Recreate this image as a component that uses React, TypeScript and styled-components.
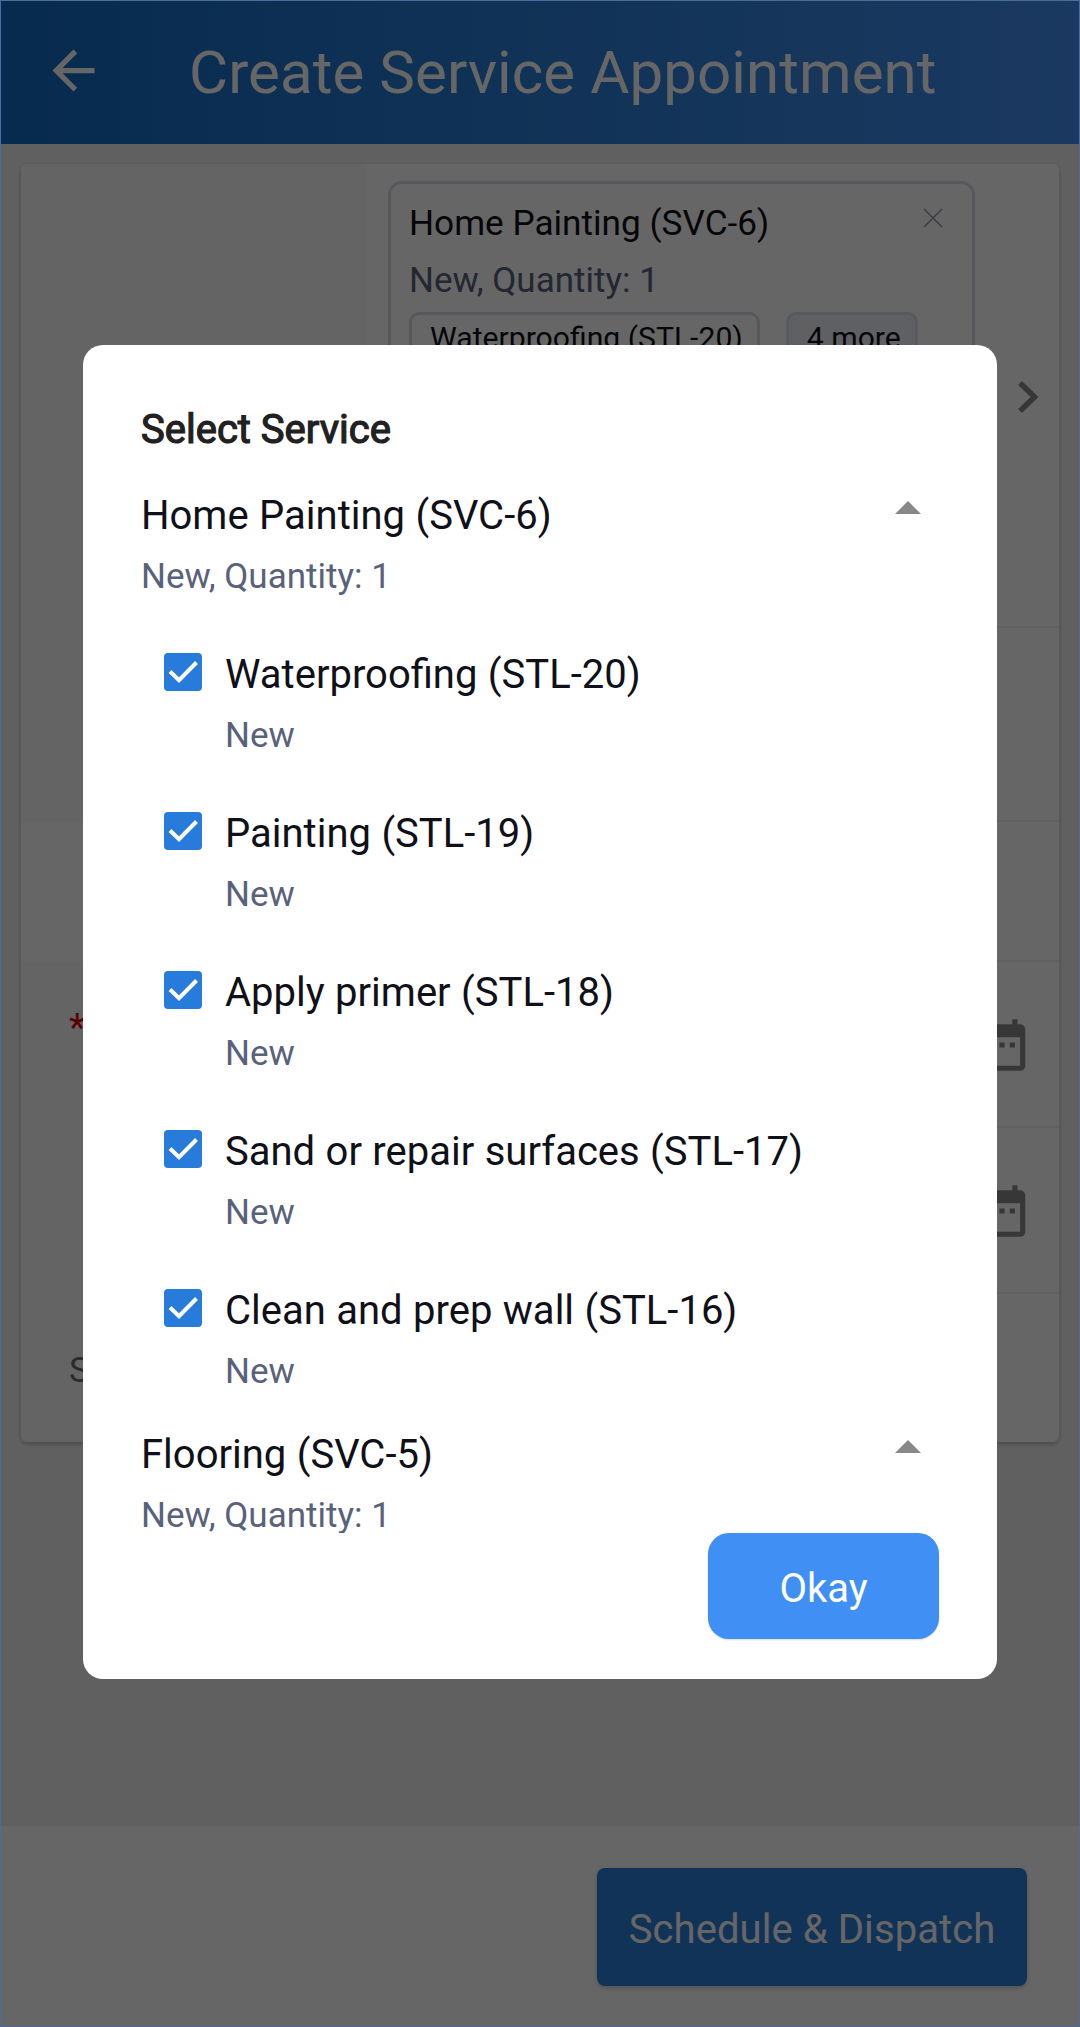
import React from 'react';
import styled, { createGlobalStyle } from 'styled-components';

const GlobalStyle = createGlobalStyle`
  * { box-sizing: border-box; }
  body { margin: 0; font-family: Roboto, "Liberation Sans", sans-serif; }
  button { font-family: inherit; border: 0; padding: 0; }
`;

const Screen = styled.div`
  position: relative;
  display: flex;
  flex-direction: column;
  width: 1080px;
  height: 2027px;
  background: #f1f1f1;
  overflow: hidden;
`;

const Header = styled.header`
  display: flex;
  align-items: center;
  height: 144px;
  flex: none;
  padding: 0 0 3px 42px;
  background: linear-gradient(90deg, #116bc4 0%, #2b7fd8 50%, #448ff2 100%);
  color: #fff;
`;

const BackIcon = styled.svg`
  width: 63px;
  height: 63px;
  flex: none;
  fill: #fff;
`;

const HeaderTitle = styled.h1`
  margin: 4px 0 0 84px;
  font-size: 60px;
  line-height: 68px;
  font-weight: 400;
  letter-spacing: 0.1px;
  white-space: nowrap;
`;

const FormCard = styled.section`
  display: flex;
  flex-direction: column;
  margin: 20px 21px 0;
  height: 1278px;
  flex: none;
  border-radius: 6px;
  background: #fff;
  box-shadow: 0 2px 4px rgba(0, 0, 0, 0.25);
  overflow: hidden;
`;

const FormLabel = styled.div<{ $plain?: boolean; $top?: number }>`
  width: 345px;
  flex: none;
  padding: ${(p) => p.$top ?? 0}px 0 0 48px;
  background: ${(p) => (p.$plain ? '#fff' : '#fbfbfb')};
  color: #6b6b6b;
  font-size: 35px;
  line-height: 40px;
  white-space: nowrap;
`;

const Required = styled.span`
  color: #e00000;
  font-size: 38px;
`;

const FormValue = styled.div`
  display: flex;
  flex: 1;
  justify-content: space-between;
  padding: 17px 0 0 22px;
  border-bottom: 2px solid #f2f2f2;
`;

const FormRow = styled.div<{ $height: number }>`
  display: flex;
  height: ${(p) => p.$height}px;
  flex: none;
  &:last-child ${FormValue} { border-bottom: 0; }
`;

const ServiceBox = styled.div`
  width: 587px;
  height: 400px;
  padding: 19px 18px;
  border: 3px solid #dadde6;
  border-radius: 14px;
`;

const ServiceBoxHead = styled.div`
  display: flex;
  justify-content: space-between;
  padding-right: 9px;
`;

const ServiceBoxTitle = styled.div`
  color: #101018;
  font-size: 35.2px;
  line-height: 40px;
`;

const ServiceBoxMeta = styled.div`
  margin-top: 18px;
  color: #59617a;
  font-size: 35px;
  line-height: 40px;
`;

const CloseIcon = styled.svg`
  width: 24px;
  height: 24px;
  margin-top: 3px;
  stroke: #9a9ba2;
  stroke-width: 1.6;
`;

const ChipRow = styled.div`
  display: flex;
  gap: 26px;
  margin-top: 11px;
`;

const Chip = styled.div<{ $filled?: boolean }>`
  height: 52px;
  padding: 3px 14px 0 18px;
  border: 3px solid ${(p) => (p.$filled ? '#dadfe9' : '#dadde6')};
  border-radius: 10px;
  background: ${(p) => (p.$filled ? '#ecf0f7' : '#fff')};
  color: #101018;
  font-size: 30.15px;
  line-height: 40px;
  white-space: nowrap;
`;

const RowChevron = styled.svg`
  width: 20px;
  height: 32px;
  margin: 200px 21px 0 0;
  fill: none;
  stroke: #8a8a8a;
  stroke-width: 5.5;
`;

const CalendarIcon = styled.svg`
  width: 62px;
  height: 62px;
  margin: 35px 26px 0 auto;
  fill: #8a8a8a;
`;

const Footer = styled.footer`
  display: flex;
  justify-content: flex-end;
  height: 201px;
  flex: none;
  margin-top: auto;
  padding: 42px 53px 0 0;
  background: #fff;
`;

const DispatchButton = styled.button`
  width: 430px;
  height: 118px;
  padding-top: 4px;
  border-radius: 8px;
  background: #2e7fdb;
  box-shadow: 0 2px 4px rgba(0, 0, 0, 0.2);
  color: #fff;
  font-size: 40px;
  letter-spacing: 0.08px;
`;

const Backdrop = styled.div`
  position: absolute;
  inset: 0;
  display: flex;
  align-items: flex-start;
  padding: 345px 83px 0;
  background: rgba(0, 0, 0, 0.6);
`;

const ScreenEdge = styled.div`
  position: absolute;
  inset: 0;
  border: 1px solid #4b6c9e;
  pointer-events: none;
`;

const Dialog = styled.div`
  display: flex;
  flex-direction: column;
  width: 914px;
  height: 1334px;
  padding: 61px 58px 40px 58px;
  border-radius: 20px;
  background: #fff;
`;

const DialogTitle = styled.h2`
  margin: 0;
  height: 87px;
  flex: none;
  color: #212121;
  font-size: 40px;
  line-height: 48px;
  font-weight: 400;
  -webkit-text-stroke: 1.2px #212121;
`;

const ServiceList = styled.div`
  display: flex;
  flex-direction: column;
  height: 1040px;
  flex: none;
  overflow: hidden;
`;

const ServiceHead = styled.div`
  display: flex;
  justify-content: space-between;
  height: 144px;
  flex: none;
  padding-right: 18px;
`;

const ItemName = styled.div`
  color: #101018;
  font-size: 40px;
  line-height: 46px;
  word-spacing: 0.5px;
  white-space: nowrap;
`;

const ItemMeta = styled.div`
  margin-top: 18px;
  color: #59627a;
  font-size: 35px;
  line-height: 40px;
`;

const Collapse = styled.svg`
  width: 26px;
  height: 13px;
  margin-top: 8px;
  fill: #888;
`;

const ItemRow = styled.label`
  display: flex;
  height: 159px;
  flex: none;
  padding: 15px 0 0 23px;
`;

const CheckMark = styled.svg`
  width: 38px;
  height: 38px;
  margin: 1px 23px 0 0;
  flex: none;
`;

const DialogActions = styled.div`
  display: flex;
  justify-content: flex-end;
`;

const OkayButton = styled.button`
  width: 231px;
  height: 106px;
  padding-top: 4px;
  border-radius: 21px;
  background: #3f8ff5;
  box-shadow: 0 1px 2px rgba(0, 0, 0, 0.15);
  color: #fff;
  font-size: 40px;
`;

const Calendar = () => (
  <CalendarIcon viewBox="0 0 24 24">
    <path d="M9 11H7v2h2v-2zm4 0h-2v2h2v-2zm4 0h-2v2h2v-2zm2-7h-1V2h-2v2H8V2H6v2H5c-1.11 0-1.99.9-1.99 2L3 20c0 1.1.89 2 2 2h14c1.1 0 2-.9 2-2V6c0-1.1-.9-2-2-2zm0 16H5V9h14v11z" />
  </CalendarIcon>
);

const Arrow = () => (
  <Collapse viewBox="0 0 26 13">
    <path d="M0 13L13 0l13 13z" />
  </Collapse>
);

const items = [
  'Waterproofing (STL-20)',
  'Painting (STL-19)',
  'Apply primer (STL-18)',
  'Sand or repair surfaces (STL-17)',
  'Clean and prep wall (STL-16)',
];

const ServiceHeading = ({ name }: { name: string }) => (
  <ServiceHead>
    <div>
      <ItemName>{name}</ItemName>
      <ItemMeta>New, Quantity: 1</ItemMeta>
    </div>
    <Arrow />
  </ServiceHead>
);

const ServiceItem = ({ name }: { name: string }) => (
  <ItemRow>
    <CheckMark viewBox="0 0 38 38">
      <rect width="38" height="38" rx="4" fill="#277bdb" />
      <path d="M6 18.5l9 8.7L32.5 9.5" fill="none" stroke="#fff" strokeWidth="4" />
    </CheckMark>
    <div>
      <ItemName>{name}</ItemName>
      <ItemMeta>New</ItemMeta>
    </div>
  </ItemRow>
);

export default function App() {
  return (
    <>
      <GlobalStyle />
      <Screen>
        <Header>
          <BackIcon viewBox="0 0 24 24">
            <path d="M20 11H7.83l5.59-5.59L12 4l-8 8 8 8 1.41-1.41L7.83 13H20v-2z" />
          </BackIcon>
          <HeaderTitle>Create Service Appointment</HeaderTitle>
        </Header>
        <FormCard>
          <FormRow $height={464}>
            <FormLabel />
            <FormValue>
              <ServiceBox>
                <ServiceBoxHead>
                  <ServiceBoxTitle>Home Painting (SVC-6)</ServiceBoxTitle>
                  <CloseIcon viewBox="0 0 24 24">
                    <path d="M3 3l18 18M21 3L3 21" />
                  </CloseIcon>
                </ServiceBoxHead>
                <ServiceBoxMeta>New, Quantity: 1</ServiceBoxMeta>
                <ChipRow>
                  <Chip>Waterproofing (STL-20)</Chip>
                  <Chip $filled>4 more</Chip>
                </ChipRow>
              </ServiceBox>
              <RowChevron viewBox="0 0 20 32">
                <path d="M2 2l14.5 14L2 30" />
              </RowChevron>
            </FormValue>
          </FormRow>
          <FormRow $height={194}>
            <FormLabel />
            <FormValue />
          </FormRow>
          <FormRow $height={140}>
            <FormLabel $plain />
            <FormValue />
          </FormRow>
          <FormRow $height={166}>
            <FormLabel $top={46}><Required>*</Required></FormLabel>
            <FormValue><Calendar /></FormValue>
          </FormRow>
          <FormRow $height={166}>
            <FormLabel />
            <FormValue><Calendar /></FormValue>
          </FormRow>
          <FormRow $height={148}>
            <FormLabel $top={57}>S</FormLabel>
            <FormValue />
          </FormRow>
        </FormCard>
        <Footer>
          <DispatchButton>Schedule &amp; Dispatch</DispatchButton>
        </Footer>
        <Backdrop>
          <Dialog role="dialog">
            <DialogTitle>Select Service</DialogTitle>
            <ServiceList>
              <ServiceHeading name="Home Painting (SVC-6)" />
              {items.map((name) => <ServiceItem key={name} name={name} />)}
              <ServiceHeading name="Flooring (SVC-5)" />
            </ServiceList>
            <DialogActions>
              <OkayButton>Okay</OkayButton>
            </DialogActions>
          </Dialog>
        </Backdrop>
        <ScreenEdge />
      </Screen>
    </>
  );
}
